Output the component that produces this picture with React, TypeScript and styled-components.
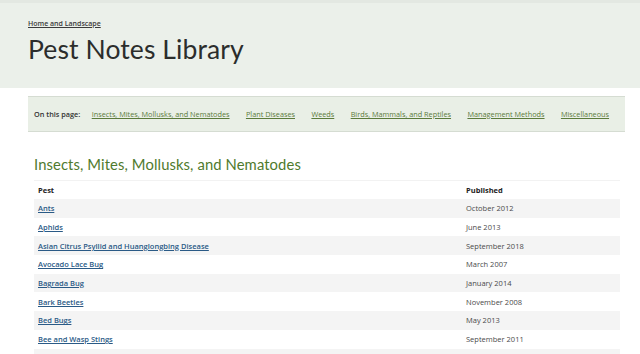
import React from "react";
import styled, { createGlobalStyle } from "styled-components";

const Global = createGlobalStyle`
  html, body { margin: 0; padding: 0; background: #ffffff; }
  body { font-family: "Open Sans", "Liberation Sans", sans-serif; overflow: hidden; }
`;

const Banner = styled.header`
  background: #ebf0ea;
  border-top: 3px solid #e3e8e2;
  height: 85px;
  padding-left: 28px;
  box-sizing: content-box;
`;

const Crumb = styled.a`
  display: inline-block;
  margin-top: 16px;
  font-family: "Open Sans", sans-serif;
  font-size: 7px;
  font-weight: 600;
  color: #3b3b3b;
  text-decoration: underline;
  line-height: 9px;
`;

const Title = styled.h1`
  margin: 3px 0 0 0;
  font-family: "Lato", "Noto Sans", sans-serif;
  font-weight: 400;
  font-size: 26.5px;
  line-height: 30px;
  color: #2b2d2c;
  letter-spacing: 0.1px;
`;

const Main = styled.main`
  padding: 8px 15px 0 28px;
`;

const Nav = styled.nav`
  display: flex;
  align-items: center;
  height: 34px;
  background: #e9efe6;
  border-top: 1px solid #d5dcd2;
  border-bottom: 1px solid #d5dcd2;
  padding-left: 6px;
  gap: 16.4px;
  font-size: 7.3px;
  white-space: nowrap;
`;

const NavLabel = styled.span`
  font-weight: 600;
  color: #333;
  margin-right: -5px;
`;

const NavLink = styled.a`
  color: #5b7a3b;
  text-decoration: underline;
`;

const Section = styled.section`
  padding: 0 4px 0 6px;
`;

const Heading = styled.h2`
  margin: 22px 0 6px 0;
  font-family: "Lato", "Noto Sans", sans-serif;
  font-weight: 400;
  font-size: 14.8px;
  line-height: 20px;
  color: #4f7a2d;
  letter-spacing: 0.1px;
`;

const Table = styled.table`
  width: 586px;
  border-collapse: collapse;
  font-size: 7.5px;
`;

const Th = styled.th<{ $w?: string }>`
  text-align: left;
  font-weight: 700;
  color: #222;
  height: 18px;
  padding: 0 4px;
  border-top: 1px solid #f2f2f2;
  width: ${(p) => p.$w || "auto"};
`;

const Row = styled.tr<{ $alt: boolean }>`
  background: ${(p) => (p.$alt ? "#f4f4f4" : "#ffffff")};
  height: 18.7px;
`;

const Td = styled.td`
  padding: 0 4px;
  color: #4a4a4a;
`;

const PestLink = styled.a`
  color: #2a5a86;
  font-weight: 600;
  text-decoration: underline;
`;

const navItems = [
  "Insects, Mites, Mollusks, and Nematodes",
  "Plant Diseases",
  "Weeds",
  "Birds, Mammals, and Reptiles",
  "Management Methods",
  "Miscellaneous",
];

const pests: [string, string][] = [
  ["Ants", "October 2012"],
  ["Aphids", "June 2013"],
  ["Asian Citrus Psyllid and Huanglongbing Disease", "September 2018"],
  ["Avocado Lace Bug", "March 2007"],
  ["Bagrada Bug", "January 2014"],
  ["Bark Beetles", "November 2008"],
  ["Bed Bugs", "May 2013"],
  ["Bee and Wasp Stings", "September 2011"],
  ["", ""],
];

export default function App() {
  return (
    <>
      <Global />
      <Banner>
        <Crumb href="#">Home and Landscape</Crumb>
        <Title>Pest Notes Library</Title>
      </Banner>
      <Main>
        <Nav>
          <NavLabel>On this page:</NavLabel>
          {navItems.map((n) => (
            <NavLink key={n} href="#">
              {n}
            </NavLink>
          ))}
        </Nav>
        <Section>
          <Heading>Insects, Mites, Mollusks, and Nematodes</Heading>
          <Table>
            <thead>
              <tr>
                <Th $w="420px">Pest</Th>
                <Th>Published</Th>
              </tr>
            </thead>
            <tbody>
              {pests.map(([name, date], i) => (
                <Row key={i} $alt={i % 2 === 0}>
                  <Td>{name ? <PestLink href="#">{name}</PestLink> : null}</Td>
                  <Td>{date}</Td>
                </Row>
              ))}
            </tbody>
          </Table>
        </Section>
      </Main>
    </>
  );
}
